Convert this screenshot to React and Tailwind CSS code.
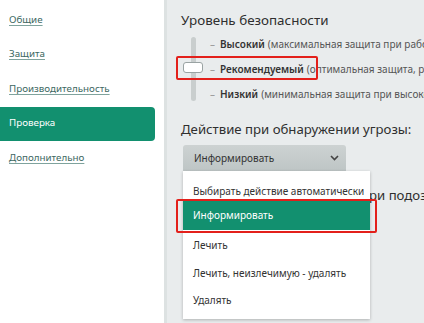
import React from 'react';

const navItems = ['Общие', 'Защита', 'Производительность', 'Проверка', 'Дополнительно'];

const levels = [
  { name: 'Высокий', desc: '(максимальная защита при работе в сети)' },
  { name: 'Рекомендуемый', desc: '(оптимальная защита, рекомендуется)' },
  { name: 'Низкий', desc: '(минимальная защита при высокой скорости)' },
];

const actions = ['Выбирать действие автоматически', 'Информировать', 'Лечить', 'Лечить, неизлечимую - удалять', 'Удалять'];

function Chevron() {
  return (
    <svg width="9" height="6" viewBox="0 0 9 6" className="text-[#444]">
      <path d="M1 1l3.5 3.5L8 1" fill="none" stroke="currentColor" strokeWidth="1.6" />
    </svg>
  );
}

export default function App() {
  return (
    <div className="flex w-[424px] h-[323px] overflow-hidden bg-white" style={{ fontFamily: '"Noto Sans", "Open Sans", sans-serif' }}>
      {/* sidebar */}
      <nav className="w-[164px] shrink-0 bg-white pt-[3px] flex flex-col">
        {navItems.map((item, i) => (
          <div
            key={item}
            className={`h-[34.5px] w-[155px] flex items-center pl-[9px] text-[9.8px] ${
              i === 3 ? 'bg-[#12906f] text-white rounded-r-[4px]' : 'text-[#3d6862] underline underline-offset-2 decoration-[#7fa39d]'
            }`}
          >
            {item}
          </div>
        ))}
      </nav>
      <div className="w-[3px] shrink-0 bg-[#dde2e2]" />

      {/* main */}
      <main className="relative flex-1 bg-[#e9eced] pl-[14px] pt-[10px] text-[#333]">
        <h2 className="text-[13.4px] leading-[20px] font-normal text-[#2f2f2f]">Уровень безопасности</h2>

        <div className="relative mt-[2px] flex">
          <div className="relative w-[29px] shrink-0">
            <div className="absolute left-[10px] top-[5px] h-[64px] w-[5px] rounded-full bg-[#c9cece]" />
            <div className="absolute left-[2px] top-[30px] h-[11px] w-[20px] rounded-[3px] border border-[#9aa3a3] bg-white" />
          </div>
          <div className="flex flex-col">
            {levels.map((l) => (
              <div key={l.name} className="h-[25px] flex items-center whitespace-nowrap text-[10px] text-[#555]">
                <span className="mr-[5px] text-[#999]">–</span>
                <span className="font-semibold text-[#333]">{l.name}</span>
                <span className="ml-[3px]">{l.desc}</span>
              </div>
            ))}
          </div>
          <div className="absolute left-[-5px] top-[24px] h-[24px] w-[142px] border-2 border-[#e3201b] rounded-[2px]" />
        </div>

        <h2 className="mt-[12px] text-[13.2px] leading-[20px] font-normal text-[#2f2f2f] whitespace-nowrap">Действие при обнаружении угрозы:</h2>

        <div className="relative mt-[6px]">
          <div className="ml-[2px] flex h-[26px] w-[163px] items-center justify-between rounded-t-[3px] bg-gradient-to-b from-[#cdd2d2] to-[#bec5c5] pl-[11px] pr-[7px] text-[10px] text-[#333]">
            <span>Информировать</span>
            <Chevron />
          </div>
          <div className="mt-[14px] text-[13.2px] leading-[20px] whitespace-nowrap text-[#2f2f2f] pl-[180px]">при подозрении</div>

          {/* dropdown */}
          <div className="absolute left-[2px] top-[26px] w-[187px] bg-white shadow-[0_1px_3px_rgba(0,0,0,0.25)] pb-[4px] text-[10px] text-[#333]">
            {actions.map((a, i) => (
              <div
                key={a}
                className={`flex items-center pl-[10px] whitespace-nowrap ${
                  i === 1 ? 'h-[29px] bg-[#12906f] text-white mb-[2px]' : i === 0 ? 'h-[30px] pt-[10px]' : 'h-[27.5px]'
                }`}
              >
                {a}
              </div>
            ))}
          </div>
          <div className="absolute left-[-5px] top-[54px] h-[34px] w-[201px] border-2 border-[#e3201b] rounded-[2px]" />
        </div>
      </main>
    </div>
  );
}
